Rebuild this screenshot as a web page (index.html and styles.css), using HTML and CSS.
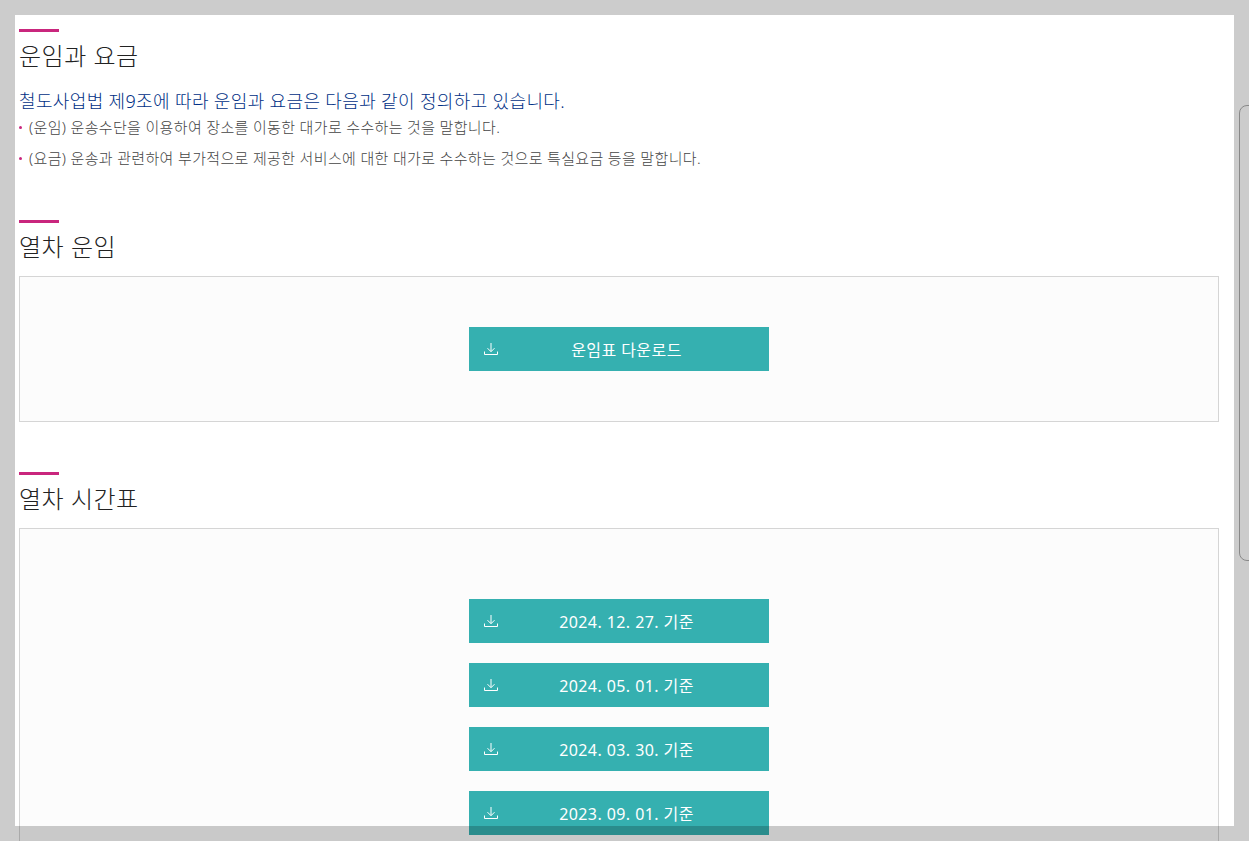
FILE: index.html
```html
<!DOCTYPE html>
<html lang="ko">
<head>
    <meta charset="UTF-8">
    <meta name="viewport" content="width=device-width, initial-scale=1.0">
    <title>운임과 요금</title>
    <link rel="stylesheet" href="styles.css">
</head>
<body>
    <div class="content">
        <section class="section section-fare">
            <h2 class="title">운임과 요금</h2>
            <p class="lead">철도사업법 제9조에 따라 운임과 요금은 다음과 같이 정의하고 있습니다.</p>
            <ul class="bullets">
                <li>(운임) 운송수단을 이용하여 장소를 이동한 대가로 수수하는 것을 말합니다.</li>
                <li>(요금) 운송과 관련하여 부가적으로 제공한 서비스에 대한 대가로 수수하는 것으로 특실요금 등을 말합니다.</li>
            </ul>
        </section>

        <section class="section">
            <h2 class="title">열차 운임</h2>
            <div class="box box-fare">
                <a class="btn" href="#">
                    <svg class="btn-icon" viewBox="0 0 14 14" width="14" height="14"><path d="M7 1v8.5M3.5 6.2 7 9.7l3.5-3.5M.5 9.5v3h13v-3" fill="none" stroke="#fff"/></svg>
                    <span class="btn-label">운임표 다운로드</span>
                </a>
            </div>
        </section>

        <section class="section">
            <h2 class="title">열차 시간표</h2>
            <div class="box box-time">
                <a class="btn" href="#">
                    <svg class="btn-icon" viewBox="0 0 14 14" width="14" height="14"><path d="M7 1v8.5M3.5 6.2 7 9.7l3.5-3.5M.5 9.5v3h13v-3" fill="none" stroke="#fff"/></svg>
                    <span class="btn-label">2024. 12. 27. 기준</span>
                </a>
                <a class="btn" href="#">
                    <svg class="btn-icon" viewBox="0 0 14 14" width="14" height="14"><path d="M7 1v8.5M3.5 6.2 7 9.7l3.5-3.5M.5 9.5v3h13v-3" fill="none" stroke="#fff"/></svg>
                    <span class="btn-label">2024. 05. 01. 기준</span>
                </a>
                <a class="btn" href="#">
                    <svg class="btn-icon" viewBox="0 0 14 14" width="14" height="14"><path d="M7 1v8.5M3.5 6.2 7 9.7l3.5-3.5M.5 9.5v3h13v-3" fill="none" stroke="#fff"/></svg>
                    <span class="btn-label">2024. 03. 30. 기준</span>
                </a>
                <a class="btn" href="#">
                    <svg class="btn-icon" viewBox="0 0 14 14" width="14" height="14"><path d="M7 1v8.5M3.5 6.2 7 9.7l3.5-3.5M.5 9.5v3h13v-3" fill="none" stroke="#fff"/></svg>
                    <span class="btn-label">2023. 09. 01. 기준</span>
                </a>
            </div>
        </section>
    </div>

    <div class="side-tab"></div>
    <div class="frame"></div>
</body>
</html>
```

FILE: styles.css
```css
html, body {
    height: 100%;
    overflow: hidden;
}

body {
    margin: 0;
    padding: 0;
    background-color: #ffffff;
    font-family: "Noto Sans", "Noto Sans CJK KR", sans-serif;
}

.content {
    width: 1200px;
    padding: 29px 0 0 19px;
}

.section {
    margin-bottom: 50px;
}

.section-fare {
    margin-bottom: 46px;
}

.title {
    margin: 0;
    font-size: 24px;
    font-weight: 300;
    line-height: 36px;
    letter-spacing: 0.5px;
    color: #222;
}

.title::before {
    content: "";
    display: block;
    width: 40px;
    height: 3px;
    margin-bottom: 6px;
    background-color: #c9267d;
}

.lead {
    margin: 16px 0 0;
    font-size: 18px;
    font-weight: 300;
    line-height: 22px;
    letter-spacing: 0.35px;
    color: #002f85;
}

.bullets {
    margin: 0;
    padding: 0;
    list-style: none;
}

.bullets li {
    padding-left: 10px;
    font-size: 15px;
    font-weight: 300;
    line-height: 31px;
    letter-spacing: 0.34px;
    color: #444;
    position: relative;
}

.bullets li::before {
    content: "";
    position: absolute;
    left: 0;
    top: 14px;
    width: 3px;
    height: 3px;
    border-radius: 50%;
    background-color: #c9267d;
}

.box {
    display: flex;
    flex-direction: column;
    align-items: center;
    gap: 20px;
    margin-top: 11px;
    background-color: #fcfcfc;
    border: 1px solid #d5d5d5;
}

.box-fare {
    height: 144px;
    justify-content: center;
}

.box-time {
    padding: 70px 0 40px;
}

.btn {
    display: flex;
    align-items: center;
    flex-shrink: 0;
    width: 300px;
    height: 44px;
    padding: 0 14px 0 15px;
    box-sizing: border-box;
    background-color: #35b0b0;
    color: #fff;
    font-size: 16px;
    letter-spacing: 0.42px;
    text-decoration: none;
}

.btn-icon {
    flex-shrink: 0;
}

.btn-label {
    flex: 1;
    text-align: center;
}

/* dark frame of the popup, lies over the page */
.frame {
    position: fixed;
    top: 0;
    left: 0;
    right: 0;
    bottom: 0;
    border: 15px solid rgba(0, 0, 0, 0.2);
}

.side-tab {
    position: fixed;
    left: 1239px;
    top: 105px;
    width: 20px;
    height: 456px;
    box-sizing: border-box;
    border: 1px solid #aaa;
    border-radius: 8px;
}
```
